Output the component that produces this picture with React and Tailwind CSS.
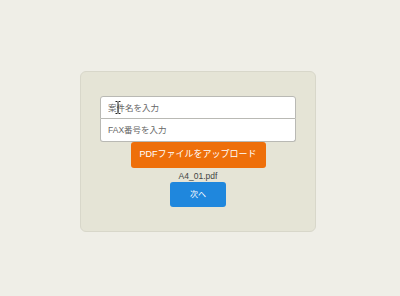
import React from 'react';

function Cursor() {
  return (
    <svg className="absolute left-[15px] top-[5px]" width="6" height="13" viewBox="0 0 6 13">
      <path d="M0.5 0.5h2M3.5 0.5h2M3 1v11M0.5 12.5h2M3.5 12.5h2" stroke="#222" strokeWidth="1" fill="none" />
    </svg>
  );
}

export default function App() {
  return (
    <div
      className="w-[400px] h-[296px] bg-[#efeee7] pt-[71px] pl-[80px]"
      style={{ fontFamily: '"Liberation Sans", "Noto Sans CJK JP", sans-serif' }}
    >
      {/* Form card */}
      <div className="w-[236px] h-[161px] bg-[#e5e4d6] border border-[#d8d7ca] rounded-[6px] pt-[24px] pl-[19px]">
        <div className="w-[196px] flex flex-col items-center">
          <div className="relative w-full">
            <input
              className="block w-full h-[23px] bg-white border border-[#b9b9b4] rounded-t-[3px] px-[7px] text-[8.5px] text-[#333] placeholder-[#666] outline-none"
              placeholder="案件名を入力"
            />
            <Cursor />
          </div>
          <input
            className="block w-full h-[23px] bg-white border border-t-0 border-[#b9b9b4] rounded-b-[3px] px-[7px] text-[8.5px] text-[#333] placeholder-[#666] outline-none"
            placeholder="FAX番号を入力"
          />
          <button className="block w-[135px] h-[26px] bg-[#ee6f0a] text-white text-[9px] rounded-[3px]">
            PDFファイルをアップロード
          </button>
          <div className="mt-[3px] text-[8.5px] leading-[11px] text-[#444]">A4_01.pdf</div>
          <button className="block w-[56px] h-[25px] bg-[#1f87dd] text-white text-[8px] rounded-[3px]">
            次へ
          </button>
        </div>
      </div>
    </div>
  );
}
